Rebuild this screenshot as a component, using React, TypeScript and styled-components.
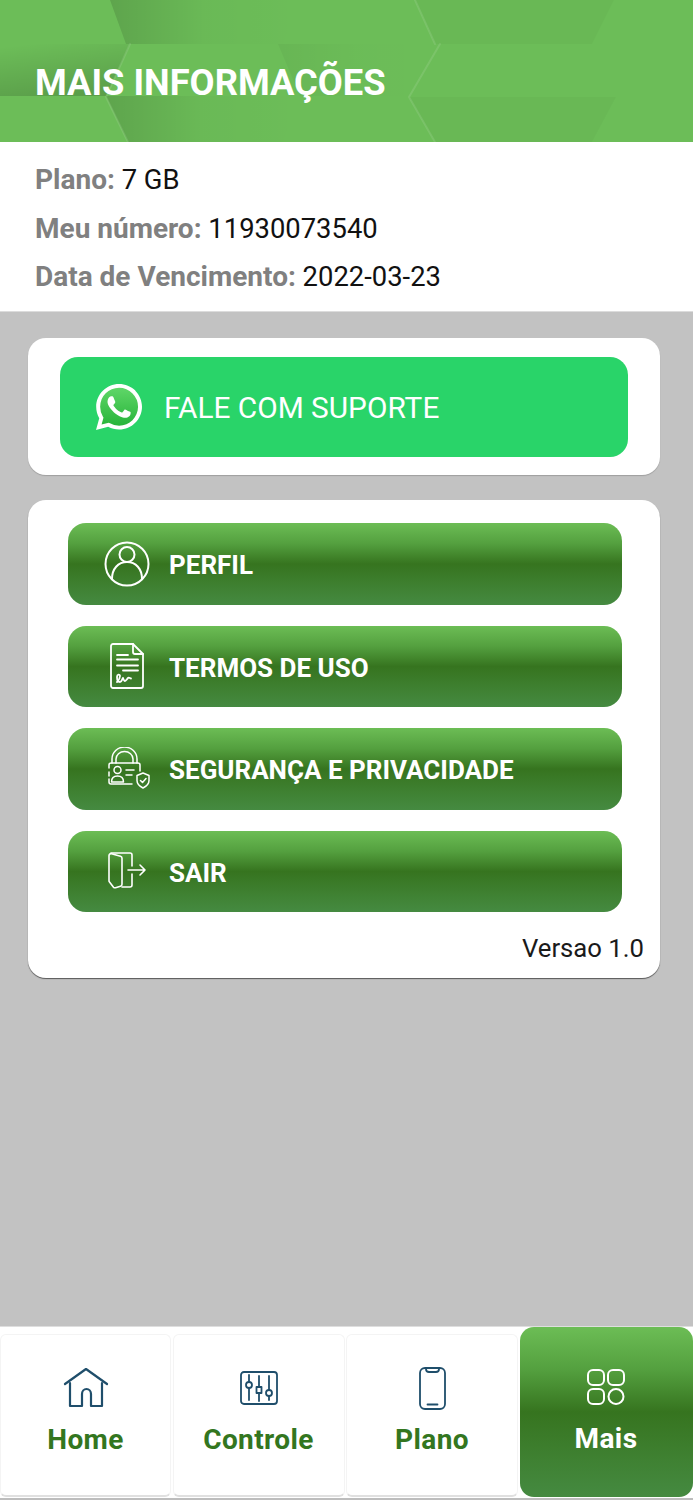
import React from 'react'
import styled, { createGlobalStyle } from 'styled-components'

const GlobalStyle = createGlobalStyle`
  html, body {
    margin: 0;
    padding: 0;
    background: #c2c2c2;
    font-family: Roboto, "Liberation Sans", sans-serif;
  }
`

const Page = styled.div`
  width: 693px;
  height: 1500px;
  display: flex;
  flex-direction: column;
  overflow: hidden;
  background: #c2c2c2;
`

const Header = styled.header`
  position: relative;
  height: 142px;
  flex: none;
  display: flex;
  align-items: center;
  padding: 24px 0 0 35px;
  box-sizing: border-box;
  background: #6cbd58;
  overflow: hidden;
`

const HexPattern = styled.svg`
  position: absolute;
  top: 0;
  left: 0;
`

const Title = styled.h1`
  position: relative;
  margin: 0;
  font-size: 36.3px;
  line-height: 38px;
  font-weight: 700;
  color: #fff;
`

const Info = styled.section`
  flex: none;
  height: 170px;
  box-sizing: border-box;
  padding: 14px 35px 0;
  background: #fff;
  border-bottom: 1px solid #dcdcdc;
`

const InfoLine = styled.div`
  height: 48.5px;
  line-height: 48.5px;
  font-size: 27.4px;
  color: #111;
`

const InfoLabel = styled.span`
  font-size: 28px;
  font-weight: 700;
  color: #808080;
`

const Content = styled.main`
  flex: 1;
  display: flex;
  flex-direction: column;
  gap: 25px;
  padding: 26px 33px 0 28px;
`

const Card = styled.div`
  background: #fff;
  border-radius: 18px;
  box-shadow: 0 1px 1px rgba(0, 0, 0, 0.18);
`

const SupportCard = styled(Card)`
  height: 137px;
  box-sizing: border-box;
  padding: 19px 32px 0;
`

const SupportButton = styled.div`
  height: 100px;
  display: flex;
  align-items: center;
  padding-left: 36px;
  gap: 22px;
  border-radius: 18px;
  background: #29d469;
  color: #fff;
  font-size: 29.8px;
`

const MenuCard = styled(Card)`
  height: 478px;
  box-sizing: border-box;
  padding: 23px 16px 0;
  display: flex;
  flex-direction: column;
  box-shadow: 0 1px 1px rgba(0, 0, 0, 0.55);
`

const MenuList = styled.div`
  display: flex;
  flex-direction: column;
  gap: 21px;
  padding: 0 22px 0 24px;
`

const greenGradient = 'linear-gradient(180deg, #6cbd55 0%, #54a03f 25%, #36741f 50%, #3f8132 78%, #458a41 100%)'

const MenuButton = styled.div`
  height: 81.5px;
  display: flex;
  align-items: center;
  padding-left: 34px;
  border-radius: 18px;
  background: ${greenGradient};
  color: #fff;
  font-size: 26px;
  font-weight: 700;
`

const MenuIcon = styled.div`
  width: 50px;
  height: 50px;
  margin-right: 17px;
  display: flex;
  align-items: center;
  justify-content: center;
`

const MenuLabel = styled.span`
  padding-top: 3px;
`

const Version = styled.div`
  margin-top: 22px;
  text-align: right;
  font-size: 25.7px;
  line-height: 28px;
  color: #1a1a1a;
`

const Nav = styled.nav`
  flex: none;
  height: 174px;
  box-sizing: border-box;
  display: grid;
  grid-template-columns: 171px 172px 172px 173px;
  column-gap: 1.5px;
  background: linear-gradient(180deg, #fff 0, #fff 171px, #bdbdbd 171px);
  border-top: 1px solid #dedede;
`

const NavItem = styled.div<{ $active?: boolean }>`
  height: ${p => (p.$active ? '170px' : '163px')};
  margin-top: ${p => (p.$active ? '0' : '7px')};
  box-sizing: border-box;
  display: flex;
  flex-direction: column;
  align-items: center;
  padding-top: ${p => (p.$active ? '38px' : '31px')};
  border-radius: ${p => (p.$active ? '14px' : '6px')};
  border: ${p => (p.$active ? 'none' : '1px solid #f4f4f4')};
  border-bottom: ${p => (p.$active ? 'none' : '2px solid #e0e0e0')};
  background: ${p => (p.$active ? greenGradient : '#fff')};
  color: ${p => (p.$active ? '#fff' : '#33761f')};
`

const NavIcon = styled.div`
  height: 44px;
  display: flex;
  align-items: center;
  justify-content: center;
`

const NavLabel = styled.div`
  margin-top: 14px;
  font-size: 28px;
  line-height: 32px;
  font-weight: 700;
  letter-spacing: 0.4px;
`

const Line = styled.g<{ $color?: string; $width?: number }>`
  fill: none;
  stroke: ${p => p.$color || '#fff'};
  stroke-width: ${p => p.$width || 1.8};
  stroke-linecap: round;
  stroke-linejoin: round;
`

const HeaderPattern = () => (
  <HexPattern width="693" height="142" viewBox="0 0 693 142">
    <defs>
      <linearGradient id="hexFade" x1="0" y1="0" x2="1" y2="0">
        <stop offset="0" stopColor="#000" stopOpacity="0.13" />
        <stop offset="0.5" stopColor="#000" stopOpacity="0.02" />
        <stop offset="1" stopColor="#000" stopOpacity="0" />
      </linearGradient>
      <linearGradient id="hexRise" x1="0.2" y1="0" x2="0.5" y2="1">
        <stop offset="0" stopColor="#000" stopOpacity="0" />
        <stop offset="1" stopColor="#000" stopOpacity="0.16" />
      </linearGradient>
    </defs>
    <polygon points="110,0 300,0 283,44 126,44" fill="url(#hexFade)" />
    <polygon points="106,96 300,96 283,142 128,142" fill="url(#hexFade)" />
    <polygon points="278,44 440,44 409,96 300,96" fill="url(#hexFade)" opacity="0.3" />
    <polygon points="0,44 130,44 106,96 0,96" fill="url(#hexRise)" />
    <polygon points="415,0 614,0 592,44 435,44" fill="#000" opacity="0.025" />
    <polygon points="409,97 616,97 592,142 435,142" fill="#000" opacity="0.025" />
    <Line $color="rgba(255,255,255,0.1)" $width={2}>
      <path d="M415 0L435 44M440 44L409 97L435 142" />
      <path d="M130 44L106 97L128 142" />
    </Line>
  </HexPattern>
)

const WhatsAppIcon = () => (
  <svg width="46" height="46" viewBox="0 0 24 24">
    <defs>
      <linearGradient id="waFill" x1="0" y1="0" x2="0" y2="1">
        <stop offset="0" stopColor="#5fd668" />
        <stop offset="1" stopColor="#27b43a" />
      </linearGradient>
    </defs>
    <path fill="#fff" d="M20.52 3.449C18.24 1.245 15.24 0 12.045 0 5.463 0 .104 5.334.101 11.893c0 2.096.549 4.14 1.595 5.945L0 24l6.335-1.652c1.746.943 3.71 1.444 5.71 1.447h.006c6.585 0 11.946-5.336 11.949-11.896 0-3.176-1.24-6.165-3.495-8.411" />
    <path fill="url(#waFill)" d="M12.051 21.785h-.004a9.87 9.87 0 01-5.031-1.378l-.361-.214-3.741.982.998-3.648-.235-.374a9.86 9.86 0 01-1.511-5.26c.001-5.45 4.436-9.884 9.888-9.884 2.64 0 5.122 1.03 6.988 2.898a9.825 9.825 0 012.893 6.994c-.003 5.45-4.437 9.884-9.885 9.884" />
    <path fill="#fff" d="M17.472 14.382c-.297-.149-1.758-.867-2.03-.967-.273-.099-.471-.148-.67.15-.197.297-.767.966-.94 1.164-.173.199-.347.223-.644.075-.297-.15-1.255-.463-2.39-1.475-.883-.788-1.48-1.761-1.653-2.059-.173-.297-.018-.458.13-.606.134-.133.298-.347.446-.52.149-.174.198-.298.298-.497.099-.198.05-.371-.025-.52-.075-.149-.669-1.612-.916-2.207-.242-.579-.487-.5-.669-.51-.173-.008-.371-.01-.57-.01-.198 0-.52.074-.792.372-.272.297-1.04 1.016-1.04 2.479 0 1.462 1.065 2.875 1.213 3.074.149.198 2.096 3.2 5.077 4.487.709.306 1.262.489 1.694.625.712.227 1.36.195 1.871.118.571-.085 1.758-.719 2.006-1.413.248-.694.248-1.289.173-1.413-.074-.124-.272-.198-.57-.347" />
  </svg>
)

const ProfileIcon = () => (
  <svg width="46" height="46" viewBox="0 0 46 46">
    <Line $width={2}>
      <circle cx="23" cy="23" r="21.500" />
      <circle cx="23" cy="13.500" r="7.500" />
      <path d="M8 38c0-10 6-17 15-17s15 7 15 17" />
    </Line>
  </svg>
)

const TermsIcon = () => (
  <svg width="36" height="46" viewBox="0 0 36 46">
    <Line>
      <path d="M2 3a2 2 0 0 1 2-2h20l10 10v32a2 2 0 0 1-2 2H4a2 2 0 0 1-2-2z" />
      <path d="M24 1v8a2 2 0 0 0 2 2h8" />
      <path d="M8 12h11M8 16.500h21M8 22.500h21M14 27.500h15" />
      <path d="M8 39c2-2 3-4 3-6s-3-2-3 1 1 5 3 5 2-3 3-4c.500 1.500 1 3 2 3s2-2 3-3 2 .500 3 .500" />
    </Line>
  </svg>
)

const SecurityIcon = () => (
  <svg width="48" height="44" viewBox="-4 0 48 44">
    <Line $width={1.5}>
      <path d="M5 16v-4a11.500 11 0 0 1 25 0v4" />
      <path d="M9 16v-4a8 7 0 0 1 17 0v4" />
      <path d="M2 21v-3a2 2 0 0 1 2-2h27a2 2 0 0 1 2 2v6M2 25v4M2 32v3a2 2 0 0 0 2 2h21" />
      <circle cx="10.500" cy="23" r="3.500" />
      <path d="M4.500 35c0-4 2.500-6 6-6s6 2 6 6z" />
      <path d="M19 23h8M19 28h6" />
      <path d="M36 26l6 2.500v5c0 3.500-3 6-6 7.500-3-1.500-6-4-6-7.500v-5z" />
      <path d="M33.500 33.500l2 2 3.500-4" />
    </Line>
  </svg>
)

const ExitIcon = () => (
  <svg width="40" height="38" viewBox="0 0 40 38">
    <Line $width={1.6}>
      <path d="M4 1h19a2 2 0 0 1 2 2v11M25 22v11a2 2 0 0 1-2 2h-8" />
      <path d="M2 3.500a2 2 0 0 1 2.500-1.800l9 2.500a2 2 0 0 1 1.500 2v26a2 2 0 0 1-1.500 2l-5 1.500a2 2 0 0 1-2-.500L2.500 30a2 2 0 0 1-.500-1.500z" />
      <path d="M21 18h17M33 13l5 5-5 5" />
    </Line>
  </svg>
)

const navStroke = '#1f4e6b'

const HomeIcon = () => (
  <svg width="46" height="40" viewBox="0 0 46 40">
    <Line $color={navStroke} $width={2.2}>
      <path d="M2 16L23 1l21 15" />
      <path d="M7 15v23h12V26a4.500 5 0 0 1 9 0v12h11V15" />
    </Line>
  </svg>
)

const ControlIcon = () => (
  <svg width="38" height="34" viewBox="0 0 38 34">
    <Line $color={navStroke} $width={1.8}>
      <rect x="1" y="1" width="36" height="32" rx="3" />
      <path d="M9 4v7M9 17v12M19 5v11M19 22v8M29 5v14M29 25v4" />
      <circle cx="9" cy="14" r="3" />
      <rect x="16.500" y="16" width="5" height="6" />
      <circle cx="29" cy="22" r="3" />
    </Line>
  </svg>
)

const PhoneIcon = () => (
  <svg width="27" height="43" viewBox="0 0 27 43">
    <Line $color={navStroke} $width={1.8}>
      <rect x="1" y="1" width="25" height="41" rx="5" />
      <path d="M7 2c0 2 1 3 3 3h7c2 0 3-1 3-3" />
      <path d="M8.500 37.500h10" />
    </Line>
  </svg>
)

const GridIcon = () => (
  <svg width="40" height="38" viewBox="0 0 40 38">
    <Line $color="#fff" $width={2}>
      <rect x="2" y="2" width="16" height="15" rx="5" />
      <rect x="22" y="2" width="16" height="15" rx="5" />
      <rect x="2" y="21" width="16" height="15" rx="5" />
      <circle cx="30" cy="28.500" r="7.500" />
    </Line>
  </svg>
)

const menuItems = [
  { label: 'PERFIL', icon: <ProfileIcon /> },
  { label: 'TERMOS DE USO', icon: <TermsIcon /> },
  { label: 'SEGURANÇA E PRIVACIDADE', icon: <SecurityIcon /> },
  { label: 'SAIR', icon: <ExitIcon /> }
]

const navItems = [
  { label: 'Home', icon: <HomeIcon /> },
  { label: 'Controle', icon: <ControlIcon /> },
  { label: 'Plano', icon: <PhoneIcon /> },
  { label: 'Mais', icon: <GridIcon />, active: true }
]

const App: React.FC = () => (
  <Page>
    <GlobalStyle />
    <Header>
      <HeaderPattern />
      <Title>MAIS INFORMAÇÕES</Title>
    </Header>
    <Info>
      <InfoLine><InfoLabel>Plano:</InfoLabel> 7 GB</InfoLine>
      <InfoLine><InfoLabel>Meu número:</InfoLabel> 11930073540</InfoLine>
      <InfoLine><InfoLabel>Data de Vencimento:</InfoLabel> 2022-03-23</InfoLine>
    </Info>
    <Content>
      <SupportCard>
        <SupportButton>
          <WhatsAppIcon />
          FALE COM SUPORTE
        </SupportButton>
      </SupportCard>
      <MenuCard>
        <MenuList>
          {menuItems.map(item => (
            <MenuButton key={item.label}>
              <MenuIcon>{item.icon}</MenuIcon>
              <MenuLabel>{item.label}</MenuLabel>
            </MenuButton>
          ))}
        </MenuList>
        <Version>Versao 1.0</Version>
      </MenuCard>
    </Content>
    <Nav>
      {navItems.map(item => (
        <NavItem key={item.label} $active={item.active}>
          <NavIcon>{item.icon}</NavIcon>
          <NavLabel>{item.label}</NavLabel>
        </NavItem>
      ))}
    </Nav>
  </Page>
)

export default App
